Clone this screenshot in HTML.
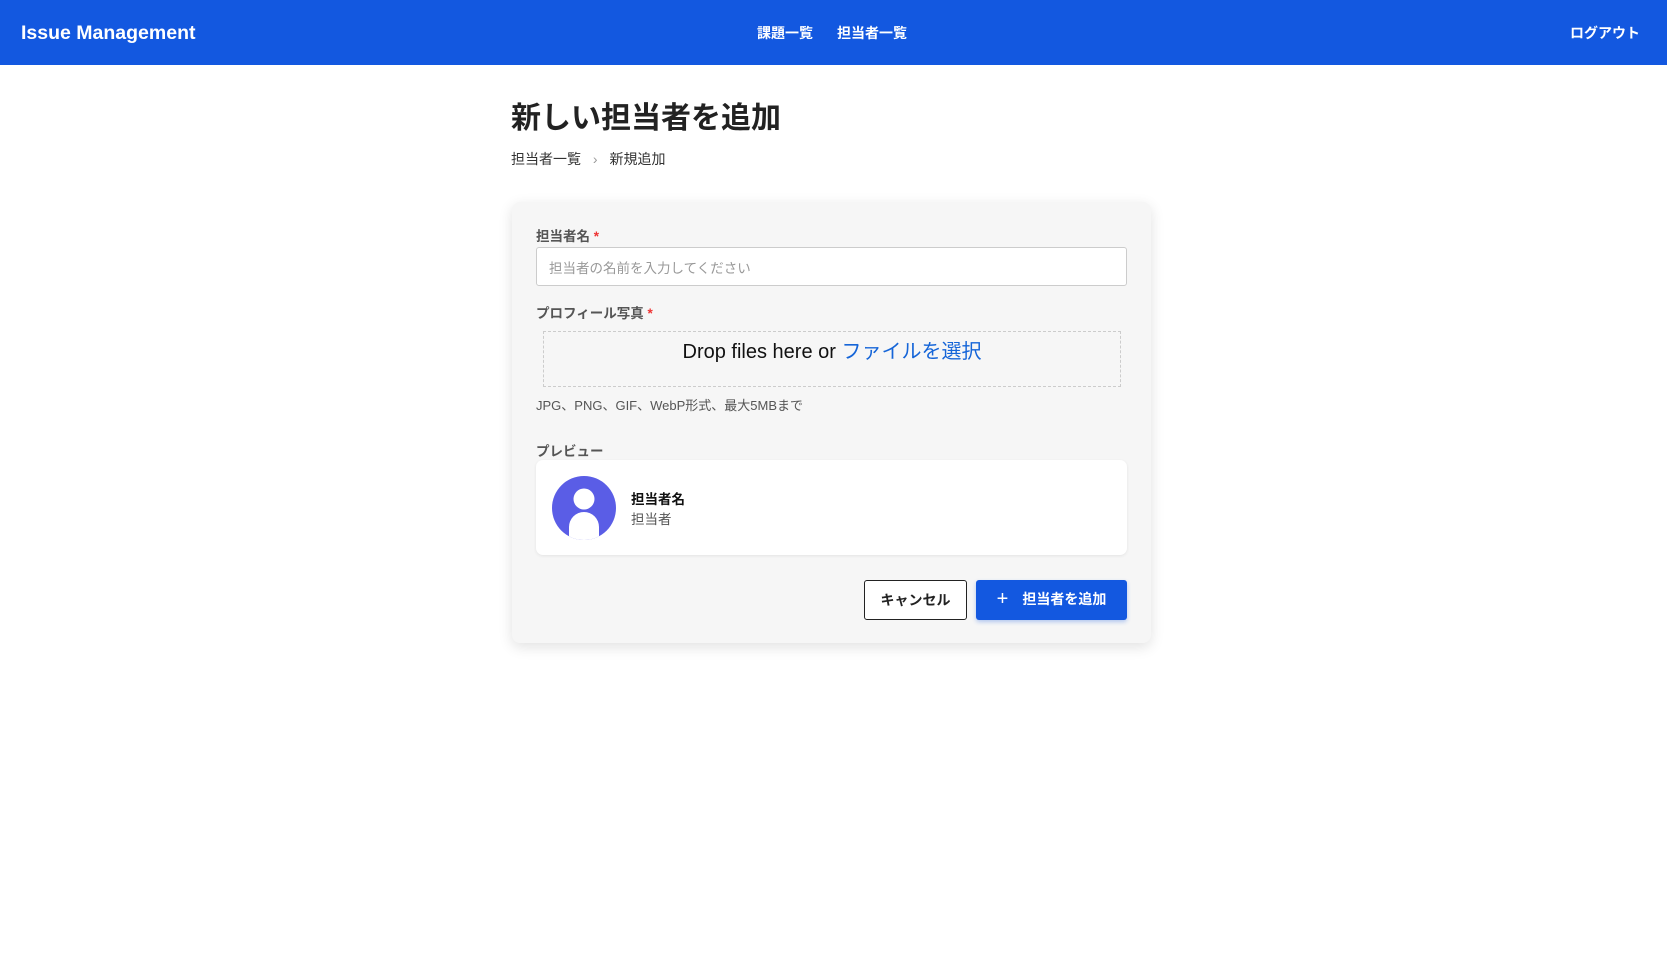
<!DOCTYPE html>
<html><head><meta charset="utf-8"><style>
*{box-sizing:border-box;margin:0;padding:0}
body{width:1667px;height:964px;background:#fff;font-family:"Liberation Sans","Noto Sans CJK JP",sans-serif;color:#222;position:relative;overflow:hidden}
.hdr{position:absolute;left:0;top:0;width:1667px;height:65px;background:#1358e0;color:#fff}
.hdr .t{position:absolute;left:21px;top:22px;font-size:19.5px;font-weight:bold}
.hdr .n{position:absolute;top:23px;font-size:14px;font-weight:bold}
.abs{position:absolute}
h1{position:absolute;left:511px;top:93px;font-size:30px;font-weight:bold;color:#222}
.bc{position:absolute;left:511px;top:149px;font-size:14px;color:#333}
.card{position:absolute;left:512px;top:202px;width:639px;height:441px;background:#f6f6f6;border-radius:8px;box-shadow:0 4px 14px rgba(0,0,0,.12)}
.lbl{position:absolute;left:24px;font-size:13.5px;font-weight:bold;color:#555}
.lbl span{color:#e33}
.inp{position:absolute;left:24px;top:45px;width:591px;height:39px;background:#fff;border:1px solid #ccc;border-radius:3px;font-size:13.5px;color:#999;padding:9px 12px}
.drop{position:absolute;left:31px;top:129px;width:578px;height:56px;border:1px dashed #ccc;text-align:center;font-size:20px;padding-top:3px;color:#111}
.drop b{font-weight:normal;color:#1565d8}
.hint{position:absolute;left:24px;top:193px;font-size:13px;color:#555}
.pv{position:absolute;left:24px;top:258px;width:591px;height:95px;background:#fff;border-radius:7px;box-shadow:0 1px 3px rgba(0,0,0,.08)}
.btn{position:absolute;top:378px;height:40px;border-radius:3px;font-size:14px;font-weight:bold;text-align:center;line-height:38px}
</style></head><body>
<div class="hdr"><div class="t">Issue Management</div>
<div class="n" style="left:757px">課題一覧</div><div class="n" style="left:837px">担当者一覧</div>
<div class="n" style="right:27px">ログアウト</div></div>
<h1>新しい担当者を追加</h1>
<div class="bc">担当者一覧 <span style="color:#999;margin:0 8px">›</span> 新規追加</div>
<div class="card">
<div class="lbl" style="top:23px">担当者名 <span>*</span></div>
<div class="inp">担当者の名前を入力してください</div>
<div class="lbl" style="top:100px">プロフィール写真 <span>*</span></div>
<div class="drop">Drop files here or <b>ファイルを選択</b></div>
<div class="hint">JPG、PNG、GIF、WebP形式、最大5MBまで</div>
<div class="lbl" style="top:238px">プレビュー</div>
<div class="pv">
<svg class="abs" style="left:16px;top:16px" width="64" height="64" viewBox="0 0 64 64"><defs><clipPath id="c"><circle cx="32" cy="32" r="32"/></clipPath></defs><circle cx="32" cy="32" r="32" fill="#5a5de6"/><g clip-path="url(#c)" fill="#fff"><circle cx="32" cy="23" r="10.5"/><rect x="17" y="36" width="30" height="40" rx="15"/></g></svg>
<div class="abs" style="left:95px;top:28px;font-size:13.5px;font-weight:bold;color:#111">担当者名</div>
<div class="abs" style="left:95px;top:48px;font-size:13.5px;color:#555">担当者</div>
</div>
<div class="btn" style="left:352px;width:103px;background:#fff;border:1px solid #222;color:#222">キャンセル</div>
<div class="btn" style="left:464px;width:151px;background:#1358e0;color:#fff;box-shadow:0 2px 4px rgba(19,88,224,.3)"><span style="font-size:20px;font-weight:normal;margin-right:14px;vertical-align:-1px">+</span>担当者を追加</div>
</div>
</body></html>
